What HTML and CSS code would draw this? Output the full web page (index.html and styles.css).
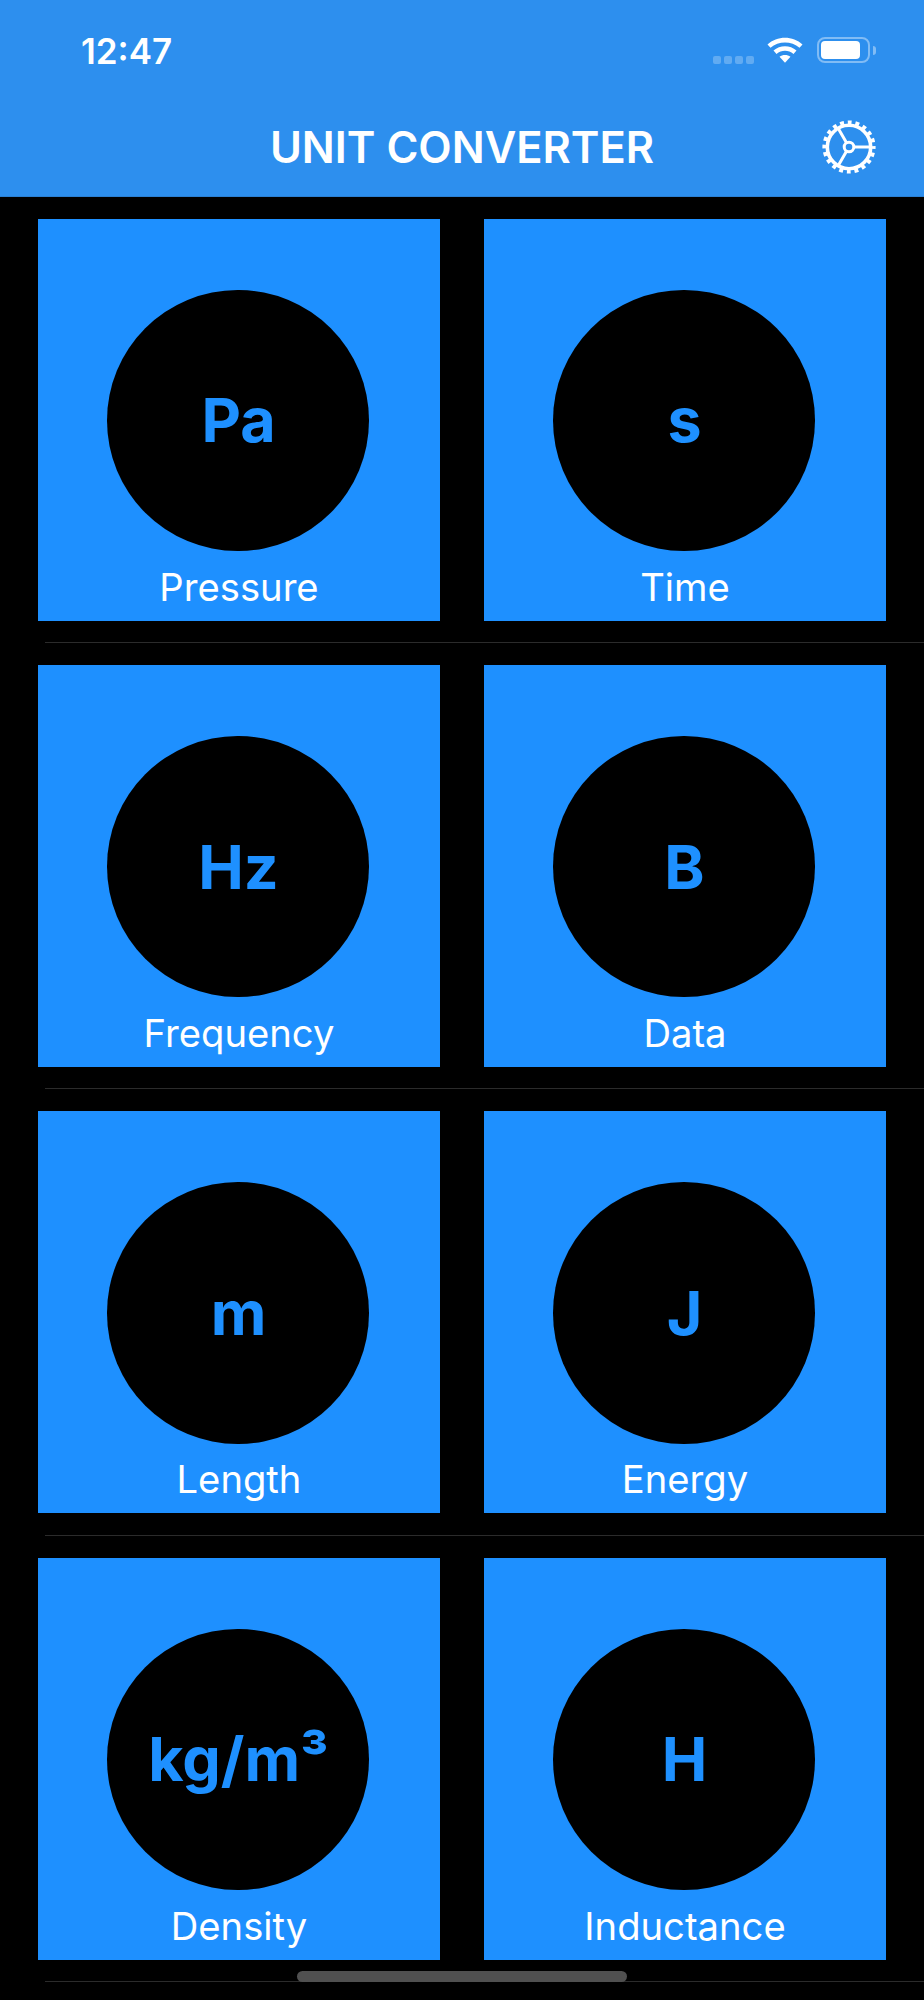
FILE: index.html
```html
<!DOCTYPE html>
<html lang="en">
<head>
  <meta charset="UTF-8" />
  <meta name="viewport" content="width=device-width, initial-scale=1.0"/>
  <title>Unit Converter</title>
  <link rel="stylesheet" href="styles.css">
</head>
<body>
  <header class="topbar">
    <div class="status">
      <span class="time">12:47</span>
      <div class="status-icons">
        <div class="signal"><i></i><i></i><i></i><i></i></div>
        <svg class="wifi" width="36" height="26" viewBox="0 0 36 26">
          <path d="M0.5 7.5C10 -1.5 26 -1.5 35.5 7.5L32.5 10.8C24.5 3.6 11.5 3.6 3.5 10.8Z" fill="#fff"/>
          <path d="M6.5 13.6C13 7.8 23 7.8 29.5 13.6L26.5 16.9C21.5 12.6 14.5 12.6 9.5 16.9Z" fill="#fff"/>
          <path d="M12.5 19.8C15.6 17.4 20.4 17.4 23.5 19.8L18 25.8Z" fill="#fff"/>
        </svg>
        <div class="battery"><div class="battery-level"></div></div>
        <div class="battery-nib"></div>
      </div>
    </div>
    <div class="navbar">
      <h1 class="title">UNIT CONVERTER</h1>
      <svg class="gear" width="54" height="54" viewBox="0 0 54 54" fill="none" stroke="#fff">
        <circle cx="27" cy="27" r="21.7" stroke-width="3.6"/>
        <circle cx="27" cy="27" r="24.2" stroke-width="4.8" stroke-dasharray="3.8 3.8" stroke-dashoffset="1.9"/>
        <circle cx="27" cy="27" r="4.8" stroke-width="3"/>
        <path d="M32 27H48M24.5 22.7L16.3 8.5M24.5 31.3L16.3 45.5" stroke-width="3"/>
      </svg>
    </div>
  </header>

  <main>
    <section class="row">
      <div class="tiles">
        <div class="tile"><div class="circle">Pa</div><p class="label">Pressure</p></div>
        <div class="tile"><div class="circle">s</div><p class="label">Time</p></div>
      </div>
      <div class="rule"></div>
    </section>
    <section class="row">
      <div class="tiles">
        <div class="tile"><div class="circle">Hz</div><p class="label">Frequency</p></div>
        <div class="tile"><div class="circle">B</div><p class="label">Data</p></div>
      </div>
      <div class="rule"></div>
    </section>
    <section class="row">
      <div class="tiles">
        <div class="tile"><div class="circle">m</div><p class="label">Length</p></div>
        <div class="tile"><div class="circle">J</div><p class="label">Energy</p></div>
      </div>
      <div class="rule"></div>
    </section>
    <section class="row">
      <div class="tiles">
        <div class="tile"><div class="circle">kg/m³</div><p class="label">Density</p></div>
        <div class="tile"><div class="circle">H</div><p class="label">Inductance</p></div>
      </div>
      <div class="rule"></div>
    </section>
  </main>

  <div class="home-indicator"></div>
</body>
</html>
```

FILE: styles.css
```css
html, body {
  margin: 0;
  padding: 0;
  height: 2000px;
  background: #000;
  font-family: Inter, "Liberation Sans", sans-serif;
  color: #fff;
  overflow: hidden;
}

/* Header */
.topbar {
  height: 197px;
  box-sizing: border-box;
  background: #2d8fee;
  border-bottom: 1px solid #2a80d4;
}

.status {
  height: 100px;
  padding: 31px 48px 0 81px;
  box-sizing: border-box;
  display: flex;
  justify-content: space-between;
  align-items: flex-start;
}

.time {
  font-size: 35px;
  font-weight: 600;
  line-height: 40px;
}

.status-icons {
  display: flex;
  align-items: flex-start;
  margin-top: 6px;
}

.signal {
  display: flex;
  gap: 3px;
  margin-top: 19px;
  margin-right: 13px;
}

.signal i {
  width: 8px;
  height: 8px;
  border-radius: 2px;
  background: rgba(255, 255, 255, 0.25);
}

.wifi {
  display: block;
  margin-right: 14px;
}

.battery {
  width: 53px;
  height: 26px;
  box-sizing: border-box;
  padding: 2px;
  border: 2px solid rgba(255, 255, 255, 0.4);
  border-radius: 8px;
}

.battery-level {
  width: 39px;
  height: 18px;
  background: #fff;
  border-radius: 4px;
}

.battery-nib {
  width: 3px;
  height: 9px;
  margin: 9px 0 0 3px;
  background: rgba(255, 255, 255, 0.4);
  border-radius: 0 3px 3px 0;
}

.navbar {
  display: flex;
  justify-content: center;
  align-items: center;
  position: relative;
  height: 96px;
}

.title {
  margin: 0 0 2px;
  font-size: 43.4px;
  font-weight: 600;
  line-height: 50px;
}

.gear {
  position: absolute;
  left: 822px;
  top: 20px;
}

/* Grid of units */
.row {
  height: 446.4px;
  box-sizing: border-box;
  padding-top: 21.5px;
}

.tiles {
  display: flex;
  gap: 44px;
  padding-left: 38px;
}

.tile {
  width: 402px;
  height: 402px;
  background: #1e90ff;
  display: flex;
  flex-direction: column;
  align-items: center;
}

.circle {
  width: 261.5px;
  height: 261.5px;
  box-sizing: border-box;
  padding-left: 1.5px;
  margin: 71px 2.4px 0 0;
  border-radius: 50%;
  background: #000;
  color: #1e90ff;
  font-size: 61px;
  font-weight: 700;
  display: flex;
  justify-content: center;
  align-items: center;
}

.label {
  margin: 13.5px 0 0;
  font-size: 38.2px;
  font-weight: 400;
  line-height: 44px;
}

.rule {
  height: 1px;
  margin: 21.5px 0 0 45px;
  background: #2b2b2b;
}

.home-indicator {
  position: absolute;
  left: 297px;
  top: 1971px;
  width: 330px;
  height: 11px;
  border-radius: 6px;
  background: #505050;
}
```
